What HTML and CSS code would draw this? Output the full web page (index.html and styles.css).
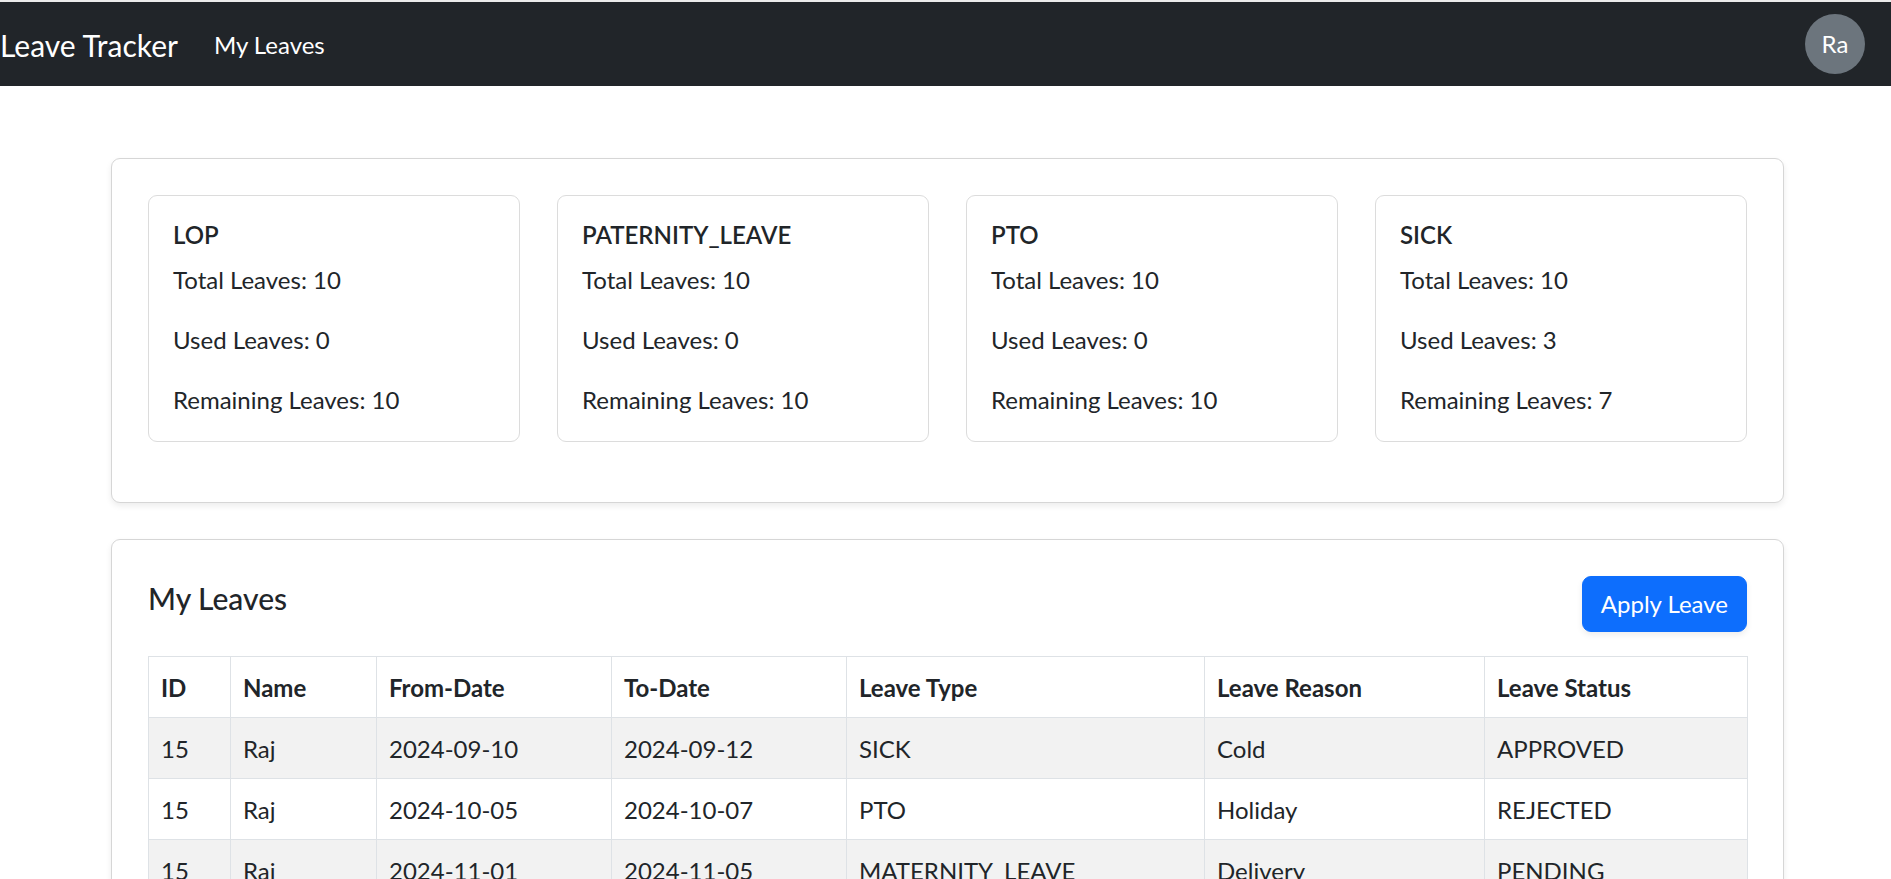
FILE: index.html
```html
<!DOCTYPE html>
<html lang="en">
<head>
<meta charset="utf-8">
<title>Leave Tracker</title>
<link rel="stylesheet" href="styles.css">
</head>
<body>
<nav class="navbar">
  <div class="nav-left">
    <a class="brand" href="#">Leave Tracker</a>
    <a class="nav-link" href="#">My Leaves</a>
  </div>
  <div class="avatar">Ra</div>
</nav>

<main class="page">
  <section class="panel summary">
    <div class="summary-grid">
      <div class="stat-card">
        <h6 class="stat-title">LOP</h6>
        <p>Total Leaves: 10</p>
        <p>Used Leaves: 0</p>
        <p>Remaining Leaves: 10</p>
      </div>
      <div class="stat-card">
        <h6 class="stat-title">PATERNITY_LEAVE</h6>
        <p>Total Leaves: 10</p>
        <p>Used Leaves: 0</p>
        <p>Remaining Leaves: 10</p>
      </div>
      <div class="stat-card">
        <h6 class="stat-title">PTO</h6>
        <p>Total Leaves: 10</p>
        <p>Used Leaves: 0</p>
        <p>Remaining Leaves: 10</p>
      </div>
      <div class="stat-card">
        <h6 class="stat-title">SICK</h6>
        <p>Total Leaves: 10</p>
        <p>Used Leaves: 3</p>
        <p>Remaining Leaves: 7</p>
      </div>
    </div>
  </section>

  <section class="panel leaves">
    <div class="leaves-head">
      <h5 class="leaves-title">My Leaves</h5>
      <button class="btn-primary" type="button">Apply Leave</button>
    </div>
    <table class="leave-table">
      <colgroup>
        <col class="c-id"><col class="c-name"><col class="c-from"><col class="c-to"><col class="c-type"><col class="c-reason"><col class="c-status">
      </colgroup>
      <thead>
        <tr><th>ID</th><th>Name</th><th>From-Date</th><th>To-Date</th><th>Leave Type</th><th>Leave Reason</th><th>Leave Status</th></tr>
      </thead>
      <tbody>
        <tr><td>15</td><td>Raj</td><td>2024-09-10</td><td>2024-09-12</td><td>SICK</td><td>Cold</td><td>APPROVED</td></tr>
        <tr><td>15</td><td>Raj</td><td>2024-10-05</td><td>2024-10-07</td><td>PTO</td><td>Holiday</td><td>REJECTED</td></tr>
        <tr><td>15</td><td>Raj</td><td>2024-11-01</td><td>2024-11-05</td><td>MATERNITY_LEAVE</td><td>Delivery</td><td>PENDING</td></tr>
      </tbody>
    </table>
  </section>
</main>
</body>
</html>
```

FILE: styles.css
```css
html {
  scrollbar-width: none;
}
html::-webkit-scrollbar { display: none; }

* { box-sizing: border-box; }

body {
  margin: 0;
  font-family: Lato, "Open Sans", "Liberation Sans", sans-serif;
  font-size: 24px;
  line-height: 1.5;
  color: #212529;
  background: #fff;
  border-top: 2px solid #ebebeb;
}

.navbar {
  height: 84px;
  background: #212529;
  display: flex;
  align-items: center;
  justify-content: space-between;
  padding: 0 26px 0 0;
}

.nav-left {
  display: flex;
  align-items: center;
}

.brand {
  color: #fff;
  text-decoration: none;
  font-size: 30px;
  line-height: 45px;
  margin-right: 24px;
  padding-top: 2px;
}

.nav-link {
  color: #fff;
  text-decoration: none;
  font-size: 24px;
  line-height: 36px;
  padding: 2px 12px 0;
}

.avatar {
  width: 60px;
  height: 60px;
  border-radius: 50%;
  background: #6c757d;
  color: #fff;
  font-size: 24px;
  display: flex;
  align-items: center;
  justify-content: center;
}

.page {
  padding: 72px 107px 0 111px;
}

.panel {
  border: 1px solid #d6d6d6;
  border-radius: 9px;
  background: #fff;
  box-shadow: 0 3px 6px rgba(0, 0, 0, 0.075);
  padding: 36px;
}

.summary {
  padding-bottom: 60px;
}

.summary-grid {
  display: grid;
  grid-template-columns: repeat(4, 1fr);
  gap: 37px;
}

.stat-card {
  border: 1px solid #dcdcdc;
  border-radius: 9px;
  padding: 25px 24px 23px;
  display: flex;
  flex-direction: column;
  gap: 24px;
}

.stat-title {
  margin: 0 0 -12px;
  font-size: 24px;
  font-weight: 600;
  line-height: 1.2;
}

.stat-card p {
  margin: 0;
}

.leaves {
  margin-top: 36px;
}

.leaves-head {
  display: flex;
  align-items: center;
  justify-content: space-between;
  margin-bottom: 24px;
}

.leaves-title {
  margin: 0 0 12px;
  font-size: 30px;
  font-weight: 500;
  line-height: 1.2;
}

.btn-primary {
  font-family: inherit;
  font-size: 24px;
  line-height: 36px;
  padding: 9px 18px;
  color: #fff;
  background: #0d6efd;
  border: 1px solid #0d6efd;
  border-radius: 9px;
  box-shadow: 0 3px 6px rgba(0, 0, 0, 0.075);
}

.leave-table {
  width: 1599px;
  border-collapse: collapse;
  table-layout: fixed;
}

.c-id { width: 82px; }
.c-name { width: 146px; }
.c-from { width: 235px; }
.c-to { width: 235px; }
.c-type { width: 358px; }
.c-reason { width: 280px; }
.c-status { width: 263px; }

.leave-table th,
.leave-table td {
  border: 1px solid #dee2e6;
  padding: 13px 12px 11px;
  text-align: left;
  line-height: 36px;
  color: #212529;
}

.leave-table th {
  font-weight: 700;
}

.leave-table tbody tr:nth-child(odd) td {
  background: #f2f2f2;
}
```
